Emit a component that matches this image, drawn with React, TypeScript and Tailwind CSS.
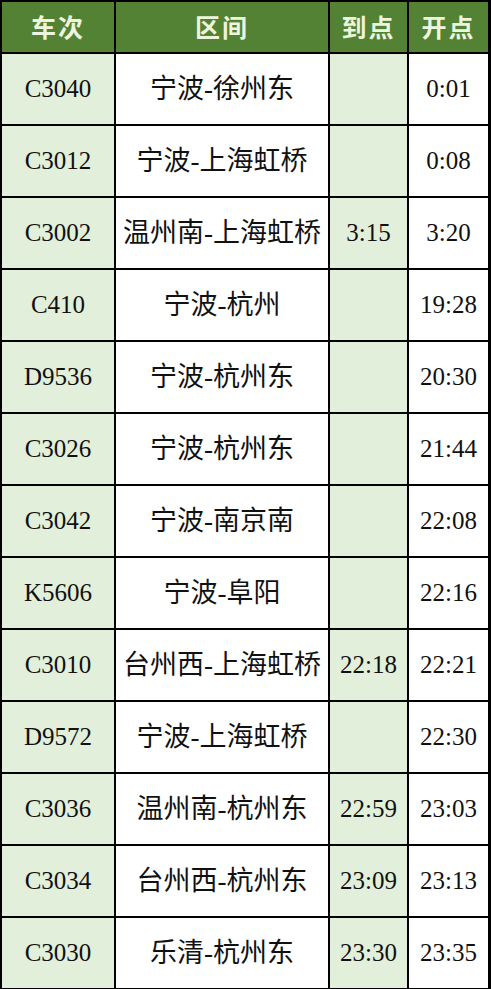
import React from "react";

const rows = [
  { train: "C3040", route: "宁波-徐州东", arrive: "", depart: "0:01" },
  { train: "C3012", route: "宁波-上海虹桥", arrive: "", depart: "0:08" },
  { train: "C3002", route: "温州南-上海虹桥", arrive: "3:15", depart: "3:20" },
  { train: "C410", route: "宁波-杭州", arrive: "", depart: "19:28" },
  { train: "D9536", route: "宁波-杭州东", arrive: "", depart: "20:30" },
  { train: "C3026", route: "宁波-杭州东", arrive: "", depart: "21:44" },
  { train: "C3042", route: "宁波-南京南", arrive: "", depart: "22:08" },
  { train: "K5606", route: "宁波-阜阳", arrive: "", depart: "22:16" },
  { train: "C3010", route: "台州西-上海虹桥", arrive: "22:18", depart: "22:21" },
  { train: "D9572", route: "宁波-上海虹桥", arrive: "", depart: "22:30" },
  { train: "C3036", route: "温州南-杭州东", arrive: "22:59", depart: "23:03" },
  { train: "C3034", route: "台州西-杭州东", arrive: "23:09", depart: "23:13" },
  { train: "C3030", route: "乐清-杭州东", arrive: "23:30", depart: "23:35" },
];

const headers = ["车次", "区间", "到点", "开点"];

export default function App() {
  return (
    <div className="w-[491px] h-[989px] bg-white">
      <div className="grid grid-cols-[112px_212px_77px_79px] grid-rows-[50px_repeat(13,70px)] gap-x-[2px] gap-y-[2px] bg-black pt-[2px] pl-[2px] pr-[3px] pb-[3px] font-['Liberation_Serif','Noto_Sans_CJK_SC',serif] text-[25px] text-[#111]">
        {headers.map((h) => (
          <div
            key={h}
            className="flex items-center justify-center bg-[#548235] font-['Noto_Sans_CJK_SC',sans-serif] font-bold text-[25px] tracking-[2px] text-[#eef5df]"
          >
            {h}
          </div>
        ))}
        {rows.map((r) => (
          <React.Fragment key={r.train}>
            <div className="flex items-center justify-center bg-[#e2efda]">{r.train}</div>
            <div className="flex items-center justify-center bg-white text-[27px]">{r.route}</div>
            <div className="flex items-center justify-center bg-[#e2efda]">{r.arrive}</div>
            <div className="flex items-center justify-center bg-white">{r.depart}</div>
          </React.Fragment>
        ))}
      </div>
    </div>
  );
}
